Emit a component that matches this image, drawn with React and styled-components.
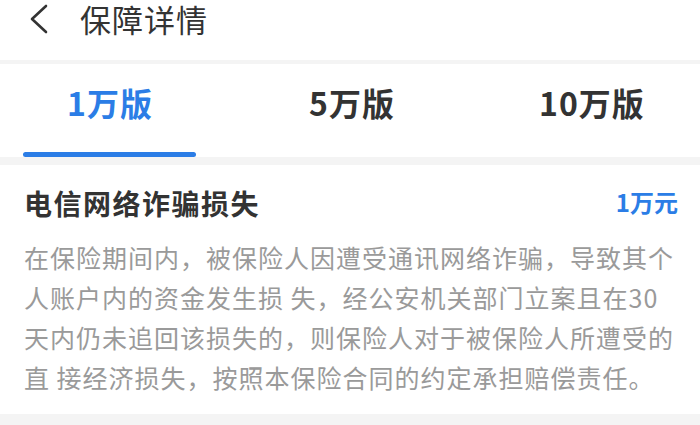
import React, { useState } from "react";
import styled, { createGlobalStyle } from "styled-components";

const GlobalStyle = createGlobalStyle`
  html, body {
    margin: 0;
    padding: 0;
    background: #f4f4f4;
    font-family: "Noto Sans CJK SC", "Noto Sans", sans-serif;
  }
`;

const BLUE = "#2b7de6";

const versions = ["1万版", "5万版", "10万版"];

const lines = [
  "在保险期间内，被保险人因遭受通讯网络诈骗，导致其个",
  "人账户内的资金发生损 失，经公安机关部门立案且在30",
  "天内仍未追回该损失的，则保险人对于被保险人所遭受的",
  "直 接经济损失，按照本保险合同的约定承担赔偿责任。",
];

export default function App() {
  const [active, setActive] = useState(0);
  return (
    <>
      <GlobalStyle />
      <Page>
        <Header>
          <Back aria-label="返回">
            <svg width="20" height="30" viewBox="0 0 20 30">
              <path d="M17 2 L3 15 L17 28" fill="none" stroke="#333" strokeWidth="2.6" strokeLinecap="round" strokeLinejoin="round" />
            </svg>
          </Back>
          <Title>保障详情</Title>
        </Header>
        <Tabs>
          {versions.map((v, i) => (
            <Tab key={v} $active={i === active} onClick={() => setActive(i)}>
              {v}
            </Tab>
          ))}
        </Tabs>
        <Card>
          <CardHead>
            <CardTitle>电信网络诈骗损失</CardTitle>
            <Amount>1万元</Amount>
          </CardHead>
          <Body>
            {lines.map((l) => (
              <Line key={l}>{l}</Line>
            ))}
          </Body>
        </Card>
      </Page>
    </>
  );
}

const Page = styled.div`
  width: 700px;
  height: 425px;
  overflow: hidden;
  background: #f4f4f4;
`;

const Header = styled.header`
  height: 60px;
  background: #fff;
  display: flex;
  align-items: flex-start;
  padding: 0 0 0 29px;
  margin-bottom: 4px;
  box-sizing: border-box;
`;

const Back = styled.div`
  display: flex;
  align-items: center;
  width: 51px;
  padding-top: 4px;
`;

const Title = styled.h1`
  margin: 0;
  font-size: 31px;
  line-height: 38px;
  font-weight: 400;
  color: #333;
  letter-spacing: 1px;
`;

const Tabs = styled.nav`
  height: 93px;
  background: #fff;
  display: grid;
  grid-template-columns: 220px 264px 216px;
  margin-bottom: 8px;
`;

const Tab = styled.div`
  position: relative;
  display: flex;
  justify-content: center;
  padding-top: 16px;
  font-size: 32px;
  line-height: 44px;
  font-weight: 700;
  letter-spacing: 1px;
  color: ${(p) => (p.$active ? BLUE : "#333")};
  cursor: pointer;

  &::after {
    content: "";
    display: ${(p) => (p.$active ? "block" : "none")};
    position: absolute;
    left: 23px;
    width: 173px;
    bottom: 0;
    height: 5px;
    border-radius: 3px;
    background: ${BLUE};
  }
`;

const Card = styled.section`
  height: 249px;
  background: #fff;
  padding: 18px 22px 0 24px;
  box-sizing: border-box;
`;

const CardHead = styled.div`
  display: flex;
  justify-content: space-between;
  align-items: center;
  margin-bottom: 14px;
`;

const CardTitle = styled.h2`
  margin: 0;
  font-size: 28px;
  line-height: 40px;
  font-weight: 700;
  color: #333;
  letter-spacing: 1.5px;
`;

const Amount = styled.span`
  font-size: 24px;
  font-weight: 700;
  color: ${BLUE};
  margin-top: -4px;
`;

const Body = styled.div`
  font-size: 25px;
  line-height: 40px;
  color: #9a9a9a;
  letter-spacing: 1px;
`;

const Line = styled.div`
  white-space: nowrap;
`;
